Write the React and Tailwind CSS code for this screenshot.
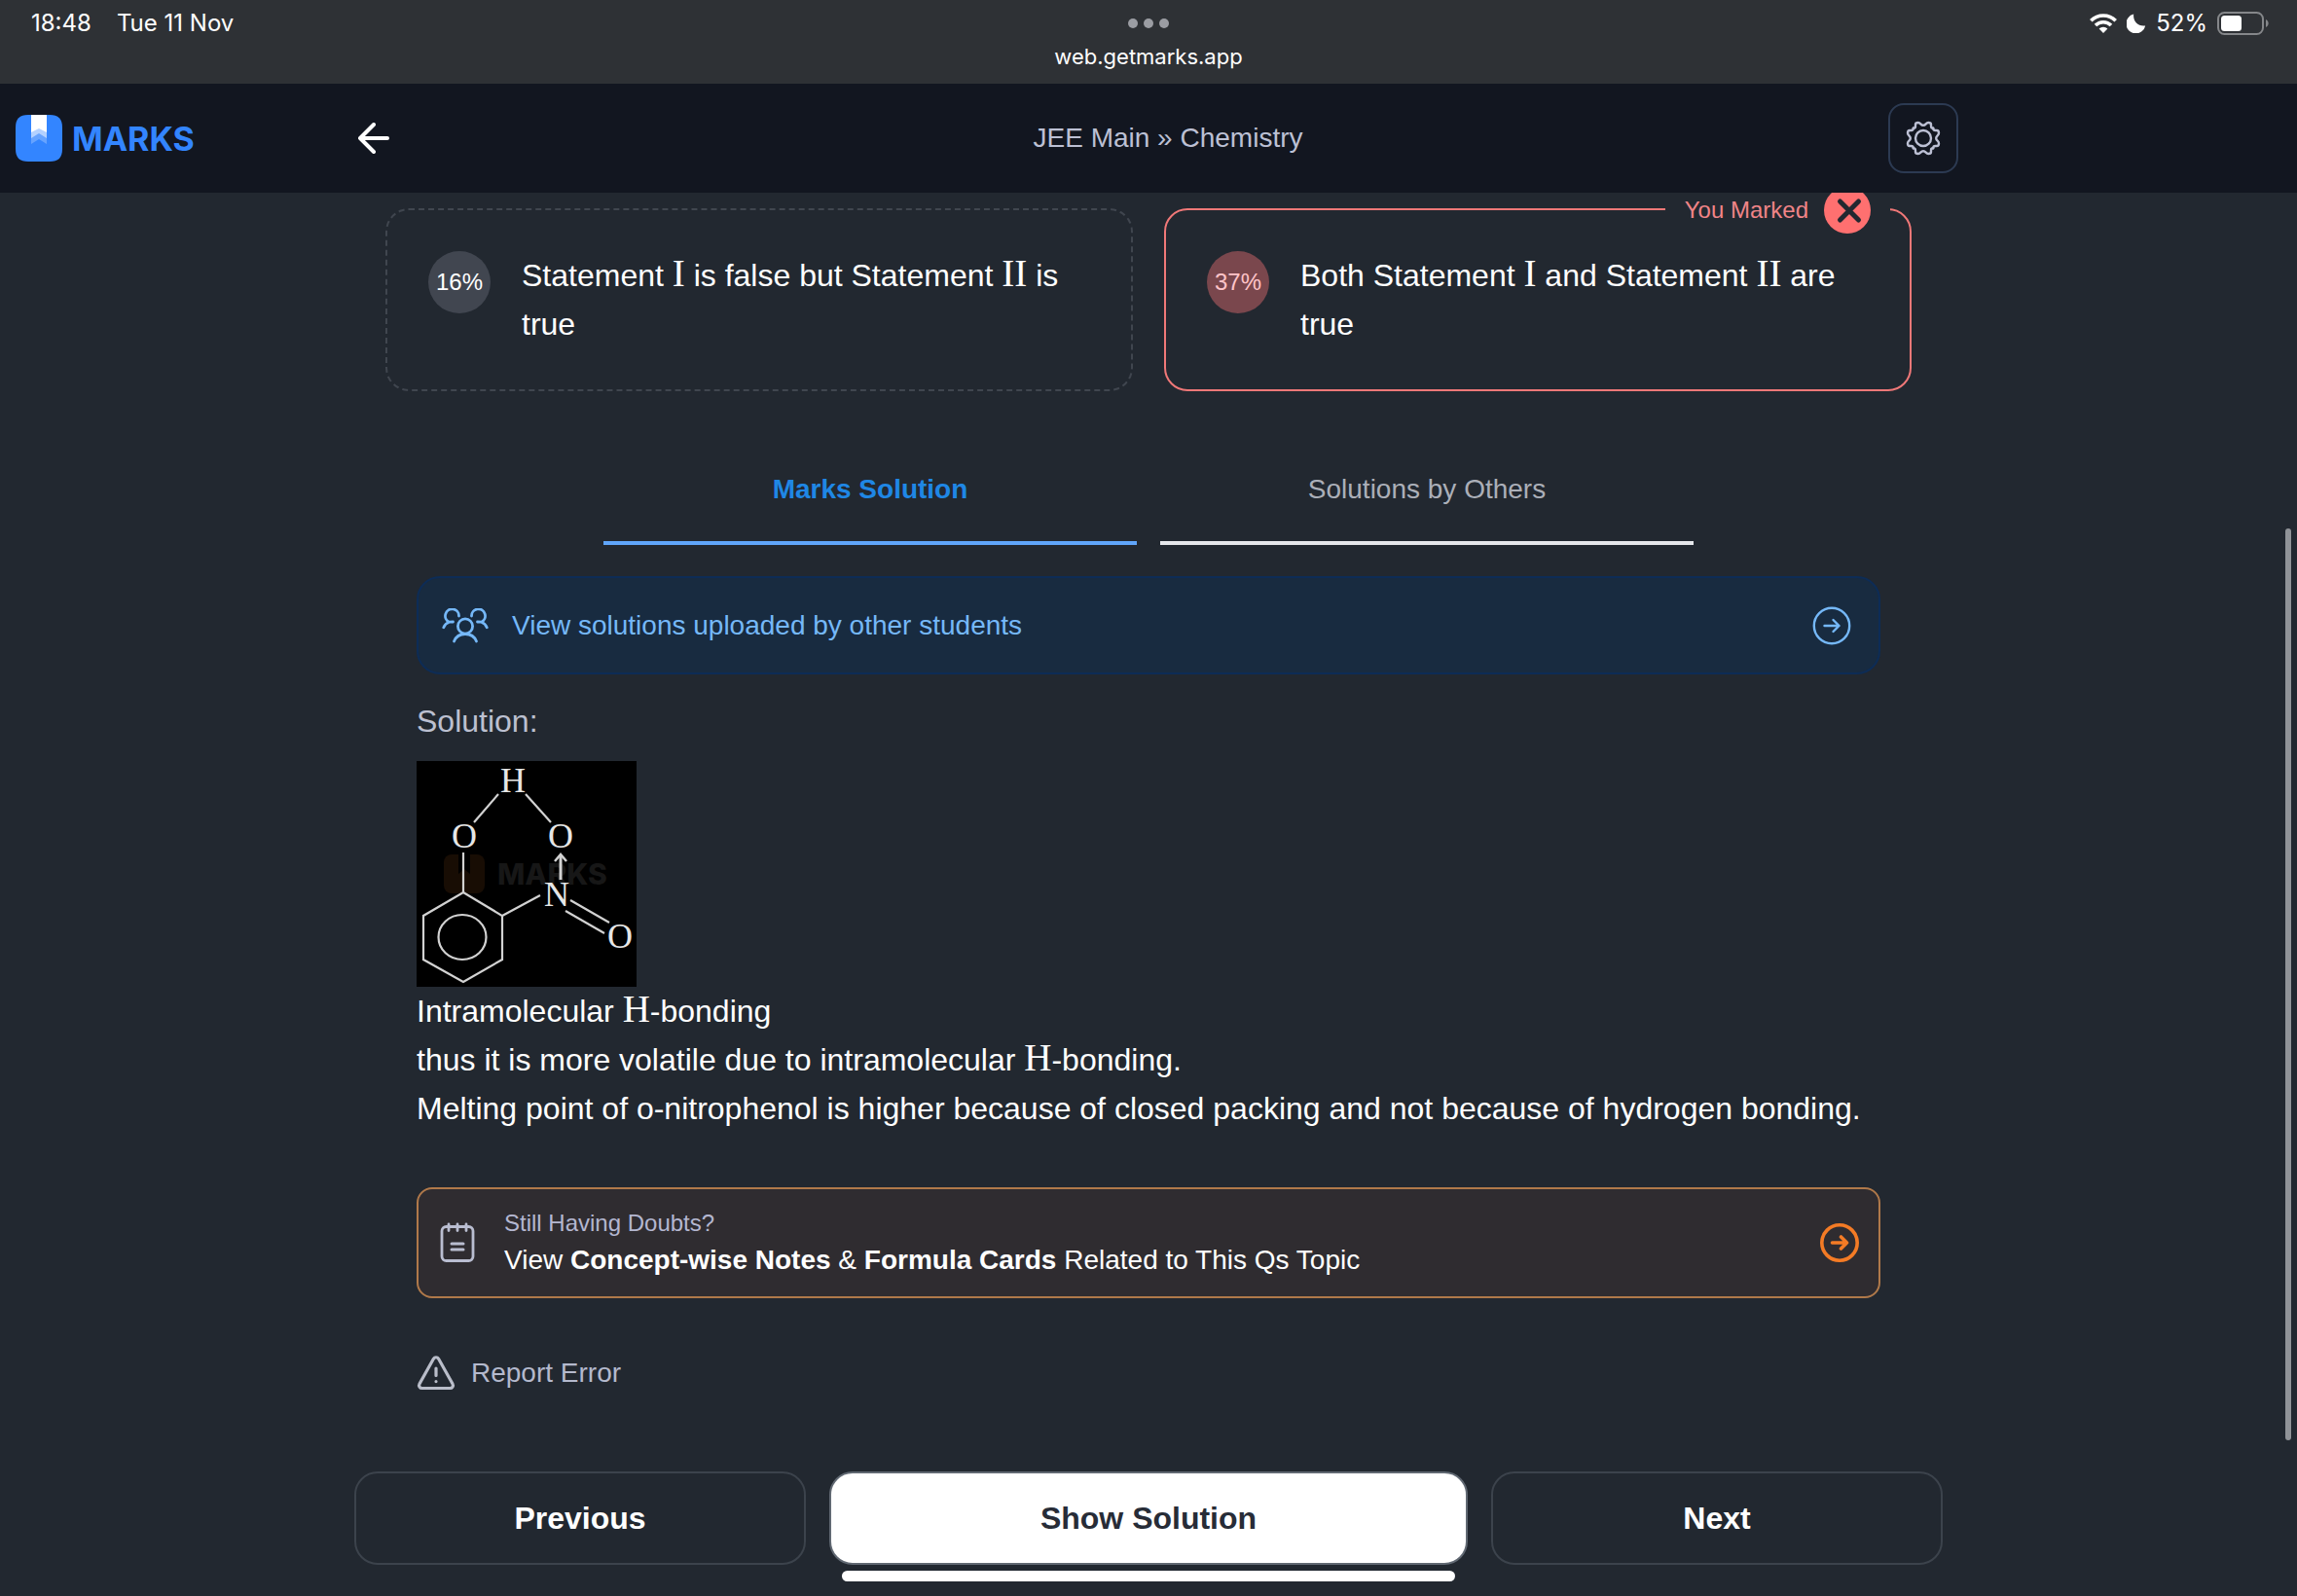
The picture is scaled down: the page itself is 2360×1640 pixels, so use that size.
import React from "react";

function Logo() {
  return (
    <svg width="48" height="48" viewBox="0 0 48 48" aria-hidden="true">
      <path d="M13 0H35C44 0 48 4 48 13V35C48 44 44 48 35 48H13C4 48 0 44 0 35V13C0 4 4 0 13 0Z" fill="#3385ff" />
      <path d="M16 0H32V30L24 25L16 30Z" fill="#66a3ff" />
      <path d="M16 0H32V24L24 19L16 24Z" fill="#b3d1ff" />
      <path d="M16 0H32V18L24 14L16 18Z" fill="#ffffff" />
    </svg>
  );
}

function WifiIcon() {
  return (
    <svg width="28" height="20" viewBox="0 0 28 20" fill="none" stroke="#fff" strokeWidth="3.6" aria-hidden="true">
      <path d="M1.3 7.3A18 18 0 0 1 26.7 7.3" />
      <path d="M6 12A11.4 11.4 0 0 1 22 12" />
      <path d="M14 20L9.6 15.4A6.4 6.4 0 0 1 18.4 15.4Z" fill="#fff" stroke="none" />
    </svg>
  );
}

function MoonIcon() {
  return (
    <svg width="20" height="20" viewBox="0 0 20 20" aria-hidden="true">
      <path d="M7.2 0.6C6.2 7.6 11.6 13.6 19.2 12.4A10 10 0 1 1 7.2 0.6Z" fill="#fff" />
    </svg>
  );
}

function BatteryIcon() {
  return (
    <svg width="54" height="24" viewBox="0 0 54 24" aria-hidden="true">
      <rect x="1" y="1" width="46" height="22" rx="6.5" fill="none" stroke="#85878a" strokeWidth="2" />
      <rect x="4" y="4" width="21" height="16" rx="3.5" fill="#fff" />
      <path d="M50 8C53.5 9.5 53.5 14.5 50 16Z" fill="#85878a" />
    </svg>
  );
}

function BackIcon() {
  return (
    <svg width="32" height="32" viewBox="0 0 32 32" fill="none" stroke="#fff" strokeWidth="4" strokeLinecap="round" strokeLinejoin="round" aria-hidden="true">
      <path d="M30 16H2M16 2L2 16L16 30" />
    </svg>
  );
}

const GEAR_SIDE =
  "M-10.2 -10.2C-8.2 -10.2 -8 -11 -8 -12.5V-14C-8 -15.6 -6.6 -16 -5.2 -16C-2.6 -16 -2.8 -13.2 0 -13.2C2.8 -13.2 2.6 -16 5.2 -16C6.6 -16 8 -15.6 8 -14V-12.5C8 -11 8.2 -10.2 10.2 -10.2";

function GearIcon() {
  return (
    <svg width="36" height="36" viewBox="-18 -18 36 36" fill="none" stroke="#bcc0d4" strokeWidth="2.4" strokeLinecap="round" strokeLinejoin="round" aria-hidden="true">
      {[0, 90, 180, 270].map((a) => (
        <path key={a} d={GEAR_SIDE} transform={`rotate(${a})`} />
      ))}
      <circle r="8" />
    </svg>
  );
}

function CrossBadge() {
  return (
    <svg width="48" height="48" viewBox="0 0 48 48" aria-hidden="true">
      <circle cx="24" cy="24" r="24" fill="#ff7070" />
      <path d="M16.500 15L35.500 34M35.500 15L16.500 34" stroke="#222830" strokeWidth="5" strokeLinecap="round" />
    </svg>
  );
}

function GroupIcon() {
  return (
    <svg width="48" height="36" viewBox="0 0 48 36" fill="none" stroke="#75b8f8" strokeWidth="2.8" strokeLinecap="round" strokeLinejoin="round" aria-hidden="true">
      <circle cx="24" cy="18.500" r="7.600" />
      <path d="M12.500 34C14.500 29 18.500 26.500 24 26.500S33.500 29 35.500 34" />
      <path d="M17.500 8A7 7 0 1 0 7.500 14.200C4.800 15.200 2.800 17 1.800 19.800M7.500 14.200L11.500 14" />
      <path d="M30.500 8A7 7 0 1 1 40.500 14.200C43.200 15.200 45.200 17 46.200 19.800M40.500 14.200L36.500 14" />
    </svg>
  );
}

function CircleArrow({ color, stroke }) {
  return (
    <svg width="40" height="40" viewBox="0 0 40 40" fill="none" stroke={color} strokeWidth={stroke} strokeLinecap="round" strokeLinejoin="round" aria-hidden="true">
      <circle cx="20" cy="20" r="18.200" />
      <path d="M12.500 20H27.500M21.500 14L27.500 20L21.500 26" />
    </svg>
  );
}

function NotesIcon() {
  return (
    <svg width="36" height="42" viewBox="0 0 36 42" fill="none" stroke="#b9bdd0" strokeWidth="2.8" strokeLinecap="round" aria-hidden="true">
      <rect x="2" y="4.500" width="32" height="35" rx="4.500" />
      <path d="M9 2V8.500M18 2V8.500M27 2V8.500" />
      <path d="M12 22H24M12 28H24" strokeWidth="3" />
    </svg>
  );
}

function WarningIcon() {
  return (
    <svg width="40" height="36" viewBox="-1 0 40 36" fill="none" stroke="#b9bdc9" strokeWidth="3.2" strokeLinecap="round" strokeLinejoin="round" aria-hidden="true">
      <path d="M16.400 3.300C17.600 1.200 20.400 1.200 21.600 3.300L36 29C37.200 31.200 35.700 33.500 33.300 33.500H4.700C2.300 33.500 0.800 31.200 2 29Z" />
      <path d="M19 13V20.500M19 26.500V26.600" />
    </svg>
  );
}

function Molecule() {
  return (
    <svg width="226" height="232" viewBox="0 0 226 232" role="img" aria-label="o-Nitrophenol with an intramolecular hydrogen bond" className="block">
      <rect width="226" height="232" fill="#000" />
      <rect x="28" y="96" width="42" height="40" rx="8" fill="#180d04" />
      <path d="M43 96H55V116L49 111L43 116Z" fill="#000" />
      <text x="83" y="127" fontSize="30" fontWeight="800" fill="#171717" fontFamily="Inter, sans-serif">MARKS</text>
      <g fill="none" stroke="#d2d2d2" strokeWidth="2.2">
        <path d="M84 34L59 63M112 34L138 63M48 94V135" />
        <path d="M48 135L88 159V204L48 227L7 204V159Z" />
        <ellipse cx="47" cy="181" rx="24.500" ry="23" />
        <path d="M88 159L127 138M158 143L198 166M153 154L193 177" />
        <path d="M148 122V97" strokeWidth="3" />
        <path d="M142 103L148 96L154 103" strokeWidth="2.500" />
      </g>
      <g fill="#e6e6e6" fontSize="36" textAnchor="middle" fontFamily="'Liberation Serif', serif">
        <text x="99" y="32">H</text>
        <text x="49" y="89">O</text>
        <text x="148" y="89">O</text>
        <text x="144" y="149">N</text>
        <text x="209" y="192">O</text>
      </g>
    </svg>
  );
}

function M({ children }) {
  return <span className="font-['Liberation_Serif',serif] text-[39px] leading-none">{children}</span>;
}

function Option({ percent, marked, children }) {
  return (
    <button
      type="button"
      className={
        marked
          ? "relative flex items-start gap-8 rounded-3xl border-2 border-[#f07878] p-[42px] text-left"
          : "relative flex items-start gap-8 rounded-3xl border-2 border-dashed border-[#40464f] p-[42px] text-left"
      }
    >
      <span
        className={
          marked
            ? "flex size-16 shrink-0 items-center justify-center rounded-full bg-[#7a474d] text-2xl text-[#ffc4c8]"
            : "flex size-16 shrink-0 items-center justify-center rounded-full bg-[#414650] text-2xl text-white"
        }
      >
        {percent}
      </span>
      <span className="text-[32px] leading-[50px] text-white">{children}</span>
      {marked && (
        <span className="absolute right-5 -top-6 flex items-center gap-4 bg-[#222830] px-5 text-2xl text-[#f08487]">
          You Marked
          <CrossBadge />
        </span>
      )}
    </button>
  );
}

export default function App() {
  return (
    <div className="relative flex min-h-screen flex-col bg-[#222830] font-['Liberation_Sans',Arial,sans-serif]">
      <div className="grid h-[86px] grid-cols-3 bg-[#2e3135] font-['Inter',sans-serif] text-2xl text-white">
        <div className="flex h-12 items-center gap-[26px] pl-8">
          <span>18:48</span>
          <span>Tue 11 Nov</span>
        </div>
        <div className="flex flex-col items-center">
          <div className="flex h-12 items-center gap-1.5">
            <span className="size-2.5 rounded-full bg-[#9b9da3]" />
            <span className="size-2.5 rounded-full bg-[#9b9da3]" />
            <span className="size-2.5 rounded-full bg-[#9b9da3]" />
          </div>
          <span className="text-[22px] leading-5">web.getmarks.app</span>
        </div>
        <div className="flex h-12 items-center justify-end gap-2.5 pr-7">
          <WifiIcon />
          <MoonIcon />
          <span>52%</span>
          <BatteryIcon />
        </div>
      </div>

      <header className="grid h-28 grid-cols-[1fr_minmax(0,1664px)_1fr] items-center bg-[#121620]">
        <a href="#home" className="flex items-center gap-2.5 pl-4 font-['Inter',sans-serif] text-[34px] font-bold text-[#3385ff]">
          <Logo />
          MARKS
        </a>
        <div className="flex items-center justify-between">
          <button type="button" aria-label="Back" className="flex h-[72px] w-28 items-center pl-5">
            <BackIcon />
          </button>
          <h1 className="text-[28px] text-[#bcc0d4]">JEE Main » Chemistry</h1>
          <button type="button" aria-label="Settings" className="flex size-[72px] items-center justify-center rounded-2xl border-2 border-[#2c3a52]">
            <GearIcon />
          </button>
        </div>
      </header>

      <main className="flex flex-col items-center overflow-hidden pt-4">
        <div className="grid w-full max-w-[1568px] grid-cols-2 gap-8">
          <Option percent="16%">
            Statement <M>I</M> is false but Statement <M>II</M> is true
          </Option>
          <Option percent="37%" marked>
            Both Statement <M>I</M> and Statement <M>II</M> are true
          </Option>
        </div>

        <div role="tablist" className="mt-10 grid w-full max-w-[1120px] grid-cols-2 gap-6 text-[28px]">
          <button type="button" role="tab" aria-selected="true" className="h-[118px] border-b-4 border-[#60a5fa] pt-2 font-bold text-[#1f87e5]">
            Marks Solution
          </button>
          <button type="button" role="tab" aria-selected="false" className="h-[118px] border-b-4 border-[#e5e7eb] pt-2 text-[#abafb8]">
            Solutions by Others
          </button>
        </div>

        <section className="mt-8 w-full max-w-[1504px]">
          <a href="#others" className="flex h-[101px] items-center rounded-3xl border-2 border-[#0d2c56] bg-[#182b40] pr-7 pl-6 text-[28px] text-[#75b8f8]">
            <GroupIcon />
            <span className="grow pl-6">View solutions uploaded by other students</span>
            <CircleArrow color="#75b8f8" stroke="2.4" />
          </a>

          <h2 className="mt-[23px] text-[32px] leading-[50px] text-[#bcc0d0]">Solution:</h2>
          <div className="mt-4">
            <Molecule />
          </div>
          <div className="text-[32px] leading-[50px] text-white">
            <p>
              Intramolecular <M>H</M>-bonding
            </p>
            <p>
              thus it is more volatile due to intramolecular <M>H</M>-bonding.
            </p>
            <p>Melting point of o-nitrophenol is higher because of closed packing and not because of hydrogen bonding.</p>
          </div>

          <a href="#notes" className="mt-14 flex h-[114px] items-center rounded-2xl border-2 border-[#b0794a] bg-[#2f2c30] pr-5 pl-[22px] text-white">
            <NotesIcon />
            <span className="flex grow flex-col pl-[30px]">
              <span className="text-2xl leading-9 text-[#b4b7d0]">Still Having Doubts?</span>
              <span className="text-[28px] leading-10">
                View <b>Concept-wise Notes</b> &amp; <b>Formula Cards</b> Related to This Qs Topic
              </span>
            </span>
            <CircleArrow color="#f47b25" stroke="3.6" />
          </a>

          <button type="button" className="mt-[57px] flex items-center gap-4 text-[28px] leading-10 text-[#b4b9cd]">
            <WarningIcon />
            Report Error
          </button>
        </section>
      </main>

      <footer className="mt-auto flex flex-col items-center pt-8 pb-[15px]">
        <nav className="grid w-full max-w-[1632px] grid-cols-[29fr_41fr_29fr] gap-6 text-[32px] font-bold text-white">
          <button type="button" className="h-24 rounded-3xl border-2 border-[#3c434c]">Previous</button>
          <button type="button" className="h-24 rounded-3xl border-2 border-[#606872] bg-white text-[#272c37]">Show Solution</button>
          <button type="button" className="h-24 rounded-3xl border-2 border-[#3c434c]">Next</button>
        </nav>
        <div className="mt-1.5 h-[11px] w-full max-w-[630px] rounded-full bg-white" />
      </footer>

      <div aria-hidden="true" className="absolute top-[543px] right-1.5 bottom-40 w-1.5 rounded-full bg-[#909398]" />
    </div>
  );
}
